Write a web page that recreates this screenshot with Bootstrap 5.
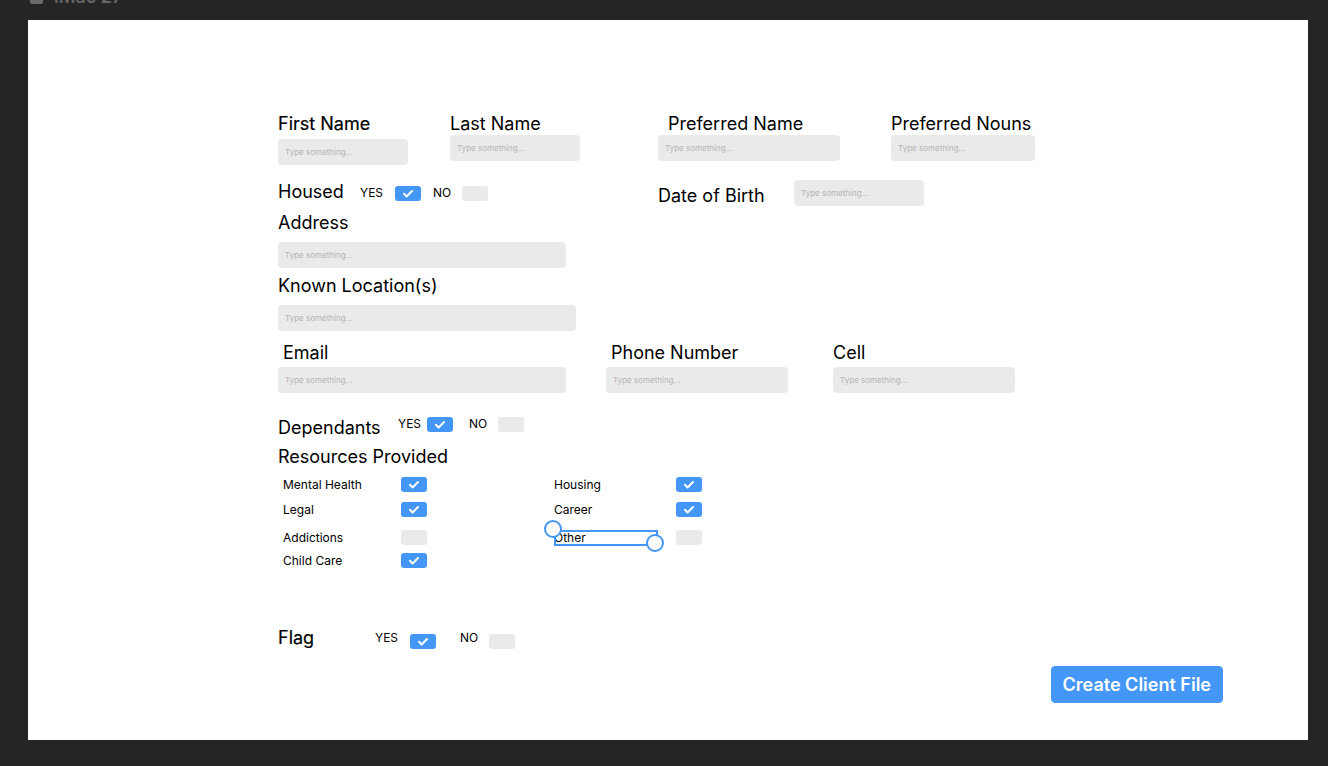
<!DOCTYPE html>
<html lang="en">
<head>
<meta charset="utf-8">
<meta name="viewport" content="width=device-width, initial-scale=1">
<title>Create Client File</title>
<link href="https://cdn.jsdelivr.net/npm/bootstrap@5.3.0/dist/css/bootstrap.min.css" rel="stylesheet">
<style>
  :root { --accent: #4497f7; --field: #eaeaea; }
  body { background: #252525; color: #000; font-family: Inter, "Liberation Sans", sans-serif; font-size: 12px; line-height: 16px; }
  .title-strip { height: 20px; padding-left: 30px; gap: 11px; color: #666; font-size: 18px; font-weight: 600; }
  .artboard-name { margin-top: -12px; }
  .artboard { margin: 0 20px 26px 28px; padding: 92px 85px 37px 250px; min-height: calc(100vh - 46px); }
  .client-form { margin-right: 165px; }
  .heading-text { font-size: 18px; line-height: 23px; font-weight: 400; margin: 0; white-space: nowrap; display: block; }
  .heading-strong { -webkit-text-stroke: 0.2px #000; }
  .entry { height: 26px; padding: 0 7px; border: 0; border-radius: 4px; background: var(--field); font-size: 8px; line-height: 26px; }
  .entry:focus { background: var(--field); }
  .entry::placeholder { color: #b4b4b4; opacity: 1; }
  .w-s { width: 130px; } .w-nouns { width: 144px; } .w-m { width: 182px; } .w-l { width: 288px; } .w-xl { width: 298px; }
  .name-grid { display: grid; grid-template-columns: 172fr 208fr 233fr 167fr; }
  .half-grid { display: grid; grid-template-columns: 380fr 400fr; margin-top: 15px; }
  .contact-grid { display: grid; grid-template-columns: 328fr 227fr 225fr; margin-top: 10px; }
  .contact-grid .entry { margin-top: 3px; }
  .resource-grid { display: grid; grid-template-columns: 271fr 504fr; padding-left: 5px; padding-top: 9px; }
  .location-row { margin-top: 6px; }
  .depend-row { margin-top: 23px; }
  .resource-title { margin-top: 6px; }
  .flag-row { margin-top: 58px; }
  .stack-gap { margin-top: 8px; }
  .nudge { padding-left: 5px; }
  .nudge-wide { padding-left: 10px; }
  .tick.form-check-input { width: 26px; height: 15px; margin: 0; border: 0; border-radius: 3px; background-color: var(--field); flex: none; }
  .tick.form-check-input:checked { background-color: var(--accent); background-size: 26px 15px;
    background-image: url("data:image/svg+xml,%3csvg xmlns='http://www.w3.org/2000/svg' viewBox='0 0 26 15'%3e%3cpath d='M9 7.800l2.600 2.700L17 5' fill='none' stroke='%23fff' stroke-width='2' stroke-linecap='round' stroke-linejoin='round'/%3e%3c/svg%3e"); }
  .housed-label { width: 82px; }
  .housed-choices { padding-top: 5px; }
  .birth-label { width: 136px; padding-top: 4px; }
  .depend-label { width: 120px; }
  .flag-label { width: 97px; }
  .yes { width: 35px; } .yes-tight { width: 29px; }
  .no { width: 29px; }
  .resource-name { width: 118px; }
  .resource-name-b { width: 122px; }
  .resource { display: flex; height: 15px; align-items: center; }
  .resource + .resource { margin-top: 10px; }
  .resource + .gap-large { margin-top: 13px; }
  .resource + .gap-small { margin-top: 8px; }
  .selection { position: absolute; left: -11px; top: -11px; pointer-events: none; }
  .create { --bs-btn-bg: var(--accent); --bs-btn-border-color: var(--accent); --bs-btn-border-radius: 4px; padding: 0 11px; height: 37px; font-size: 18px; font-weight: 600; line-height: 35px; }
</style>
</head>
<body>
<header class="title-strip d-flex align-items-start overflow-hidden">
  <svg width="13" height="5" viewBox="0 0 13 5" aria-hidden="true"><path d="M0 0h13v2q0 2-2 2H2Q0 4 0 2z" fill="#6b6b6b"/></svg>
  <span class="artboard-name lh-1">iMac 27</span>
</header>
<main class="artboard bg-white d-flex flex-column">
  <form class="d-flex flex-column flex-grow-1">
    <div class="client-form">
      <div class="name-grid">
        <div><label class="heading-text heading-strong" for="first">First Name</label><input id="first" class="form-control entry w-s mt-1" placeholder="Type something..."></div>
        <div><label class="heading-text" for="last">Last Name</label><input id="last" class="form-control entry w-s" placeholder="Type something..."></div>
        <div><label class="heading-text nudge-wide" for="pref">Preferred Name</label><input id="pref" class="form-control entry w-m" placeholder="Type something..."></div>
        <div><label class="heading-text" for="nouns">Preferred Nouns</label><input id="nouns" class="form-control entry w-nouns" placeholder="Type something..."></div>
      </div>
      <div class="half-grid">
        <div class="d-flex align-items-start">
          <h2 class="heading-text housed-label">Housed</h2>
          <div class="housed-choices d-flex align-items-center">
            <label class="yes" for="hy">YES</label><input id="hy" type="checkbox" class="form-check-input tick me-2" checked>
            <label class="no ms-1" for="hn">NO</label><input id="hn" type="checkbox" class="form-check-input tick">
          </div>
        </div>
        <div class="d-flex">
          <label class="heading-text birth-label" for="dob">Date of Birth</label><input id="dob" class="form-control entry w-s" placeholder="Type something...">
        </div>
      </div>
      <div class="mt-1">
        <label class="heading-text" for="addr">Address</label><input id="addr" class="form-control entry w-l stack-gap" placeholder="Type something...">
      </div>
      <div class="location-row">
        <label class="heading-text" for="loc">Known Location(s)</label><input id="loc" class="form-control entry w-xl stack-gap" placeholder="Type something...">
      </div>
      <div class="contact-grid">
        <div><label class="heading-text nudge" for="email">Email</label><input id="email" type="email" class="form-control entry w-l" placeholder="Type something..."></div>
        <div><label class="heading-text nudge" for="phone">Phone Number</label><input id="phone" type="tel" class="form-control entry w-m" placeholder="Type something..."></div>
        <div><label class="heading-text" for="cell">Cell</label><input id="cell" type="tel" class="form-control entry w-m" placeholder="Type something..."></div>
      </div>
      <div class="depend-row d-flex align-items-start">
        <h2 class="heading-text depend-label">Dependants</h2>
        <div class="d-flex align-items-center">
          <label class="yes-tight" for="dy">YES</label><input id="dy" type="checkbox" class="form-check-input tick me-3" checked>
          <label class="no" for="dn">NO</label><input id="dn" type="checkbox" class="form-check-input tick">
        </div>
      </div>
      <h2 class="heading-text resource-title">Resources Provided</h2>
      <div class="resource-grid">
        <div>
          <div class="resource"><label class="resource-name" for="r1">Mental Health</label><input id="r1" type="checkbox" class="form-check-input tick" checked></div>
          <div class="resource"><label class="resource-name" for="r2">Legal</label><input id="r2" type="checkbox" class="form-check-input tick" checked></div>
          <div class="resource gap-large"><label class="resource-name" for="r3">Addictions</label><input id="r3" type="checkbox" class="form-check-input tick"></div>
          <div class="resource gap-small"><label class="resource-name" for="r4">Child Care</label><input id="r4" type="checkbox" class="form-check-input tick" checked></div>
        </div>
        <div>
          <div class="resource"><label class="resource-name-b" for="r5">Housing</label><input id="r5" type="checkbox" class="form-check-input tick" checked></div>
          <div class="resource"><label class="resource-name-b" for="r6">Career</label><input id="r6" type="checkbox" class="form-check-input tick" checked></div>
          <div class="resource gap-large position-relative">
            <label class="resource-name-b" for="r7">Other</label><input id="r7" type="checkbox" class="form-check-input tick">
            <svg class="selection" width="122" height="34" viewBox="0 0 122 34" fill="none" stroke="#4497f7" stroke-width="2" aria-hidden="true">
              <path d="M12 12H114V26H12z"/>
              <circle cx="10" cy="10" r="8" fill="#fff"/><circle cx="112" cy="24" r="8" fill="#fff"/>
            </svg>
          </div>
        </div>
      </div>
      <div class="flag-row d-flex">
        <h2 class="heading-text heading-strong flag-label">Flag</h2>
        <div class="d-flex align-items-start pt-1">
          <label class="yes" for="fy">YES</label><input id="fy" type="checkbox" class="form-check-input tick mt-1 me-4" checked>
          <label class="no" for="fn">NO</label><input id="fn" type="checkbox" class="form-check-input tick mt-1">
        </div>
      </div>
    </div>
    <button type="submit" class="btn btn-primary create align-self-end mt-auto">Create Client File</button>
  </form>
</main>
<script src="https://cdn.jsdelivr.net/npm/bootstrap@5.3.0/dist/js/bootstrap.bundle.min.js"></script>
</body>
</html>
